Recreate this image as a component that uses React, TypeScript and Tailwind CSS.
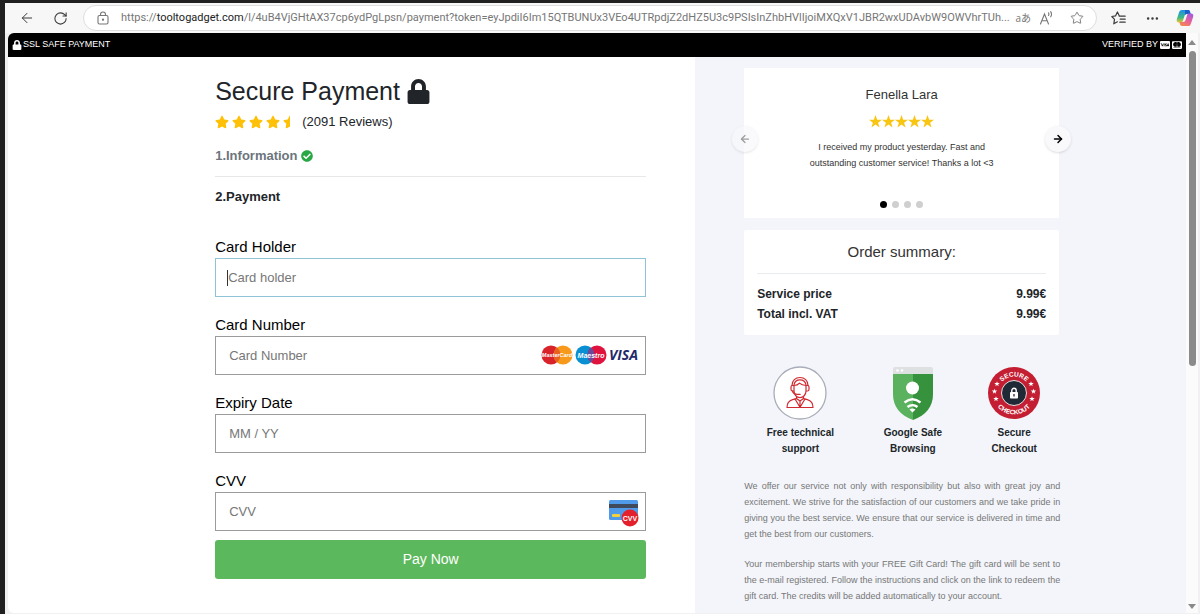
import { ArrowLeft, ArrowRight, MoreHorizontal, RotateCw, Star } from 'lucide-react'
import { FaCcMastercard, FaCcVisa, FaCheckCircle, FaLock, FaStar, FaStarHalf } from 'react-icons/fa'

const slides = [0, 1, 2, 3]

const orderLines = [
  { label: 'Service price', price: '9.99€' },
  { label: 'Total incl. VAT', price: '9.99€' }
]

function CopilotLogo() {
  return (
    <svg width="18" height="18" viewBox="0 0 18 18" aria-hidden="true">
      <defs>
        <linearGradient id="cpLeft" x1="0" y1="0" x2="0" y2="1">
          <stop offset="0" stopColor="#1c8fe8" />
          <stop offset="0.6" stopColor="#3fb984" />
          <stop offset="1" stopColor="#e9c62c" />
        </linearGradient>
        <linearGradient id="cpRight" x1="0.8" y1="0" x2="0.2" y2="1">
          <stop offset="0" stopColor="#a35be0" />
          <stop offset="0.5" stopColor="#e8619c" />
          <stop offset="1" stopColor="#f48a4a" />
        </linearGradient>
      </defs>
      <path d="M6 1h6c1.200 0 1.700.7 2 1.700L14.600 5H11c-1.500 0-2.200.8-2.600 2.200L7 11.600C6.600 13 5.900 13.500 4.600 13.500H3C1 13.500.3 12 .9 10L3 3.600C3.500 2 4.300 1 6 1z" fill="url(#cpLeft)" />
      <path d="M9 1h3c1.200 0 1.700.7 2 1.700L14.600 5H11c-1 0-1.600.3-2 1z" fill="#1d5fc9" />
      <path d="M12 17H6c-1.200 0-1.700-.7-2-1.700L3.400 13H7c1.500 0 2.200-.8 2.600-2.200L11 6.400C11.400 5 12.100 4.500 13.400 4.500H15c2 0 2.700 1.500 2.100 3.500L15 14.400C14.500 16 13.700 17 12 17z" fill="url(#cpRight)" />
    </svg>
  )
}

function BrowserBar() {
  return (
    <header className="flex h-[30px] items-center bg-[#f7f7f7] pr-[6px] pl-[14px] text-[#3b3b3b]">
      <button aria-label="Back">
        <ArrowLeft size={16} strokeWidth={1.5} />
      </button>
      <button aria-label="Refresh" className="ml-[18px]">
        <RotateCw size={15} strokeWidth={1.7} />
      </button>
      <div className="ml-[15px] flex h-[26px] min-w-0 flex-1 items-center rounded-full border border-[#dedede] bg-white px-3 text-[#767676]">
        <svg width="14" height="14" viewBox="0 0 14 14" fill="none" stroke="currentColor" strokeWidth="1.1" className="shrink-0" aria-hidden="true">
          <rect x="2" y="4.500" width="10" height="8.500" rx="1.500" />
          <path d="M4.500 4.500V3.500a2.500 2.500 0 0 1 5 0v1" />
          <circle cx="7" cy="8.700" r="0.600" fill="currentColor" />
        </svg>
        <p className="ml-[11px] min-w-0 flex-1 overflow-hidden font-['Roboto','Open_Sans',sans-serif] text-[11px] whitespace-nowrap">
          https://<span className="text-[#222222]">tooltogadget.com</span>
          /l/4uB4VjGHtAX37cp6ydPgLpsn/payment?token=eyJpdiI6Im15QTBUNUx3VEo4UTRpdjZ2dHZ5U3c9PSIsInZhbHVlIjoiMXQxV1JBR2wxUDAvbW9OWVhrTUh...
        </p>
        <button aria-label="Translate" className="ml-px shrink-0 font-['Open_Sans','Noto_Sans_CJK_JP',sans-serif] text-[10px]">
          aあ
        </button>
        <button aria-label="Read aloud" className="ml-2">
          <svg width="15" height="15" viewBox="0 0 15 15" fill="none" stroke="currentColor" strokeWidth="1.1" strokeLinecap="round">
            <path d="M1.500 13 5.500 3l4 10M2.800 9.800h5.400M9.500 4.500c.5-.8.5-1.800 0-2.600M11.700 5.800c1-1.600 1-3.600 0-5.200" />
          </svg>
        </button>
        <button aria-label="Add to favorites" className="ml-4">
          <Star size={14} strokeWidth={1.6} />
        </button>
      </div>
      <button aria-label="Favorites" className="ml-[14px]">
        <svg width="16" height="15" viewBox="0 0 16 15" fill="none" stroke="currentColor" strokeWidth="1.2" strokeLinecap="round" strokeLinejoin="round">
          <path d="M8.200 4.700 6.400 1 4.500 4.900.8 5.500l2.700 2.800-.7 4.500 3.600-2M8.200 5.200h6M9.200 8.200h5M8.800 11.200h5.400" />
        </svg>
      </button>
      <button aria-label="Settings and more" className="ml-[18px]">
        <MoreHorizontal size={15} strokeWidth={2} />
      </button>
      <button aria-label="Copilot" className="ml-4">
        <CopilotLogo />
      </button>
    </header>
  )
}

function CardLogos() {
  return (
    <svg width="98" height="20" viewBox="0 0 98 20" role="img" aria-label="MasterCard, Maestro, Visa">
      <circle cx="10" cy="10" r="9.500" fill="#d8232a" />
      <circle cx="22" cy="10" r="9.500" fill="#f79a1c" />
      <path d="M16 2.600a9.500 9.500 0 0 1 0 14.800 9.500 9.500 0 0 1 0-14.800z" fill="#e8611f" />
      <text x="16" y="12" textAnchor="middle" fontSize="5.500" fontWeight="700" fontStyle="italic" fill="#fff">MasterCard</text>
      <circle cx="44" cy="10" r="9.500" fill="#0a8fd2" />
      <circle cx="56" cy="10" r="9.500" fill="#e0133f" />
      <path d="M50 2.600a9.500 9.500 0 0 1 0 14.800 9.500 9.500 0 0 1 0-14.800z" fill="#6b4a9c" />
      <text x="50" y="12.500" textAnchor="middle" fontSize="7" fontWeight="700" fontStyle="italic" fill="#fff">Maestro</text>
      <text x="68" y="14.500" fontSize="14" fontWeight="700" fontStyle="italic" fill="#1f2a6b" fontFamily="Open Sans">VISA</text>
    </svg>
  )
}

function CvvCard() {
  return (
    <svg width="32" height="28" viewBox="0 0 32 28" role="img" aria-label="Card security code">
      <rect x="1" y="1" width="29" height="20" rx="1.500" fill="#4f9bea" />
      <rect x="1" y="5" width="29" height="4" fill="#3f4a5c" />
      <rect x="4" y="15" width="8" height="3" rx="1" fill="#f2d13c" />
      <circle cx="22" cy="19" r="8.500" fill="#e4202c" />
      <text x="22" y="21.500" textAnchor="middle" fontSize="7" fontWeight="700" fill="#fff">CVV</text>
    </svg>
  )
}

function SupportBadge() {
  return (
    <svg width="54" height="54" viewBox="0 0 54 54" fill="none" aria-hidden="true">
      <circle cx="27" cy="27" r="26" fill="#fff" stroke="#a9adb8" strokeWidth="1.300" />
      <g stroke="#cf2b30" strokeWidth="1.200" strokeLinecap="round" strokeLinejoin="round">
        <path d="M19 19.500c0-5 3.500-8 8-8s8 3 8 8M21 19c.4-3.300 3-5.200 6-5.200s5.600 1.900 6 5.200" />
        <path d="M21 19.500V25c0 3.800 2.800 6.700 6 6.700s6-2.900 6-6.700v-5.500c-3 0-5-.8-6.500-2.300-1.300 1.500-3 2.300-5.500 2.300z" />
        <path d="M20.500 19.500h-1c-1 0-1.500.7-1.500 1.500v2.500c0 1 .6 1.500 1.500 1.500h1M33.500 19.500h1c1 0 1.500.7 1.500 1.500v2.500c0 1-.6 1.500-1.500 1.500h-1" />
        <path d="M19.500 25c.5 2.300 2.500 3.300 5.200 3.300h2.500" />
        <path d="M14 41.500c0-5 1.800-6.900 5.600-7.900l3.900-1V31M40 41.500c0-5-1.800-6.900-5.600-7.900l-3.900-1V31M14 41.500h26" />
        <path d="m22 33 5 8.300 5-8.300M23.500 32.500 27 35l3.500-2.500M27 35v6" />
      </g>
    </svg>
  )
}

function BrowsingBadge() {
  return (
    <svg width="42" height="54" viewBox="0 0 42 54" fill="none" aria-hidden="true">
      <path d="M1 7h20v47C8 49 1 41 1 28z" fill="#5ab25e" />
      <path d="M21 7h20v21c0 13-7 21-20 26z" fill="#36923c" />
      <path d="M3 1h36a2 2 0 0 1 2 2v5H1V3a2 2 0 0 1 2-2z" fill="#dfe0e2" />
      <circle cx="5.500" cy="4.500" r="1.300" fill="#fff" />
      <circle cx="10" cy="4.500" r="1.300" fill="#fff" />
      <circle cx="20.500" cy="22" r="6.500" fill="#fff" />
      <g stroke="#fff" strokeWidth="2.400">
        <path d="M12.500 36.500c5-4 11-4 16 0M15.500 41c3-2.500 7-2.500 10 0" />
      </g>
      <path d="M20.500 46.500 17.500 43.500c1.800-1.300 4.200-1.300 6 0z" fill="#fff" />
    </svg>
  )
}

function CheckoutBadge() {
  const star = 'M0-2.800.7-.9 2.700-.9 1.100.4 1.700 2.300 0 1.100-1.700 2.300-1.100.4-2.700-.9-.7-.9z'
  return (
    <svg width="54" height="54" viewBox="0 0 54 54" role="img" aria-label="Secure checkout seal">
      <defs>
        <path id="sealTop" d="M10.500 27a16.500 16.500 0 0 1 33 0" />
        <path id="sealBottom" d="M5.500 27a21.500 21.500 0 0 0 43 0" />
      </defs>
      <circle cx="27" cy="27" r="26" fill="#c41e33" />
      <circle cx="27" cy="27" r="12.500" fill="#202a36" stroke="#eadfe1" strokeWidth="1" />
      <g fontSize="6.500" fontWeight="700" fill="#fff" textAnchor="middle">
        <text><textPath href="#sealTop" startOffset="50%">SECURE</textPath></text>
        <text><textPath href="#sealBottom" startOffset="50%">CHECKOUT</textPath></text>
      </g>
      <g fill="#fff">
        <path transform="translate(10 18)" d={star} />
        <path transform="translate(7.500 25.500)" d={star} />
        <path transform="translate(9 33)" d={star} />
        <path transform="translate(44 18)" d={star} />
        <path transform="translate(46.500 25.500)" d={star} />
        <path transform="translate(45 33)" d={star} />
        <rect x="23" y="26" width="8" height="6.500" rx="0.800" />
      </g>
      <path d="M24.800 26.500v-2a2.200 2.200 0 0 1 4.400 0v2" fill="none" stroke="#fff" strokeWidth="1.400" />
      <path d="M27 28v2.500" stroke="#202a36" strokeWidth="1.300" />
    </svg>
  )
}

function PaymentForm() {
  const field = 'block h-[39px] w-full border border-[#9b9b9b] bg-white px-[13px] text-[13px] text-[#212529] outline-none placeholder:text-[#777777]'
  const label = 'block text-[15px] leading-[22px] text-black'

  return (
    <form className="w-full max-w-[431px]">
      <h1 className="flex items-center gap-[6px] text-[25px] leading-8 text-[#212529]">
        Secure Payment
        <FaLock size={25} />
      </h1>
      <div className="mt-[5px] flex items-center text-[13px] leading-5 text-[#212529]">
        <span className="flex gap-[3px] text-[#ffc107]">
          <FaStar size={14} />
          <FaStar size={14} />
          <FaStar size={14} />
          <FaStar size={14} />
          <FaStarHalf size={14} />
        </span>
        <span className="ml-[5px]">(2091 Reviews)</span>
      </div>

      <h2 className="mt-[14px] flex items-center gap-[3px] border-b border-[#e6e8ea] pb-[10px] text-[13px] leading-5 font-bold text-[#6c757d]">
        1.Information
        <FaCheckCircle size={12} className="text-[#28a745]" />
      </h2>
      <h2 className="mt-[10px] text-[13px] leading-5 font-bold text-[#212529]">2.Payment</h2>

      <div className="mt-[29px] flex flex-col gap-[17px]">
        <div>
          <label htmlFor="holder" className={label}>Card Holder</label>
          <div className="relative">
            <input id="holder" placeholder="Card holder" className="block h-[39px] w-full border border-[#8fc3d6] bg-white px-3 text-[13px] text-[#212529] outline-none placeholder:text-[#777777]" />
            <span className="absolute top-3 left-[12px] h-4 w-px bg-[#333333]" />
          </div>
        </div>
        <div>
          <label htmlFor="number" className={label}>Card Number</label>
          <div className="relative">
            <input id="number" placeholder="Card Number" inputMode="numeric" className={field} />
            <span className="absolute top-[9px] right-[7px]">
              <CardLogos />
            </span>
          </div>
        </div>
        <div>
          <label htmlFor="expiry" className={label}>Expiry Date</label>
          <input id="expiry" placeholder="MM / YY" className={field} />
        </div>
        <div>
          <label htmlFor="cvv" className={label}>CVV</label>
          <div className="relative">
            <input id="cvv" placeholder="CVV" inputMode="numeric" className={field} />
            <span className="absolute top-[7px] right-[6px]">
              <CvvCard />
            </span>
          </div>
        </div>
      </div>

      <button type="button" className="mt-[9px] h-[39px] w-full rounded-[3px] bg-[#5cb85c] text-[14px] text-white">
        Pay Now
      </button>
    </form>
  )
}

function Testimonial() {
  return (
    <section className="relative h-[150px] bg-white pt-[17px] text-center text-[#333333]">
      <h3 className="text-[13px] leading-5">Fenella Lara</h3>
      <div className="mt-[10px] flex justify-center text-[#f9c513]">
        {[...Array(5)].map((_, i) => (
          <svg key={i} width="13" height="13" viewBox="0 0 24 24" fill="currentColor" aria-hidden="true">
            <path d="M12 0l3.100 8.700H24l-7.200 5.400L19.500 23 12 17.600 4.500 23l2.700-8.900L0 8.700h8.900z" />
          </svg>
        ))}
      </div>
      <p className="mx-auto mt-[11px] max-w-[200px] text-[9px] leading-4">
        I received my product yesterday. Fast and outstanding customer service! Thanks a lot &lt;3
      </p>
      <div className="mt-[30px] flex justify-center gap-[5px]">
        {slides.map((i) => (
          <button
            key={i}
            aria-label={`Review ${i + 1}`}
            className={`size-[7px] rounded-full ${i === 0 ? 'bg-black' : 'bg-[#cfcfcf]'}`}
          />
        ))}
      </div>
      <button aria-label="Previous review" className="absolute top-[58px] -left-3 flex size-[26px] items-center justify-center rounded-full bg-[#f8f8fb] text-[#777777] opacity-70 shadow-sm">
        <ArrowLeft size={12} strokeWidth={2.5} />
      </button>
      <button aria-label="Next review" className="absolute top-[58px] -right-3 flex size-[26px] items-center justify-center rounded-full bg-[#f9f9fb] text-black shadow">
        <ArrowRight size={12} strokeWidth={3} />
      </button>
    </section>
  )
}

function OrderSummary() {
  return (
    <section className="mt-3 rounded-[2px] bg-white px-[13px] pt-3 pb-[11px] text-[#212529]">
      <h3 className="border-b border-[#e9ecef] pb-[11px] text-center text-[15px] leading-5 text-[#333333]">Order summary:</h3>
      <table className="mt-[10px] w-full text-[12px] leading-5 font-bold">
        <tbody>
          {orderLines.map((line) => (
            <tr key={line.label}>
              <td>{line.label}</td>
              <td className="text-right">{line.price}</td>
            </tr>
          ))}
        </tbody>
      </table>
    </section>
  )
}

function TrustBadges() {
  return (
    <ul className="mt-[31px] grid grid-cols-[5fr_5fr_4fr] text-center text-[10px] leading-4 font-bold text-[#212529]">
      <li className="flex flex-col items-center gap-[5px]">
        <SupportBadge />
        <span>Free technical<br />support</span>
      </li>
      <li className="flex flex-col items-center gap-[5px]">
        <BrowsingBadge />
        <span>Google Safe<br />Browsing</span>
      </li>
      <li className="flex flex-col items-center gap-[5px]">
        <CheckoutBadge />
        <span>Secure<br />Checkout</span>
      </li>
    </ul>
  )
}

export default function App() {
  return (
    <div className="flex min-h-screen flex-col bg-[#202020] pt-[3px] pl-[5px] font-['Liberation_Sans',Arial,sans-serif]">
      <BrowserBar />
      <div className="flex flex-1 bg-[#f1f1f1] pr-[2px] pb-px pl-[3px]">
        <div className="flex min-w-0 flex-1 flex-col overflow-hidden rounded-l-md bg-white">
          <div className="flex h-6 items-center justify-between bg-black px-1 text-[9px] text-white">
            <span className="flex items-center gap-px">
              <FaLock size={10} />
              SSL SAFE PAYMENT
            </span>
            <span className="flex items-center gap-[2px]">
              VERIFIED BY
              <FaCcVisa size={10} />
              <FaCcMastercard size={10} />
            </span>
          </div>

          <main className="grid flex-1 grid-cols-[7fr_5fr]">
            <div className="flex justify-end pt-[18px] pr-[49px] pl-4">
              <PaymentForm />
            </div>
            <aside className="bg-[#f3f5fa] px-[49px] pt-[11px] pb-2">
              <div className="max-w-[315px]">
                <Testimonial />
                <OrderSummary />
                <TrustBadges />
              </div>
              <div className="mt-[21px] flex max-w-[316px] flex-col gap-[14px] text-justify text-[9px] leading-4 text-[#777777]">
                <p>
                  We offer our service not only with responsibility but also with great joy and excitement. We strive
                  for the satisfaction of our customers and we take pride in giving you the best service. We ensure
                  that our service is delivered in time and get the best from our customers.
                </p>
                <p>
                  Your membership starts with your FREE Gift Card! The gift card will be sent to the e-mail
                  registered. Follow the instructions and click on the link to redeem the gift card. The credits will
                  be added automatically to your account.
                </p>
              </div>
            </aside>
          </main>
        </div>

        <div className="flex w-3 flex-col items-center bg-[#fbfbfb] pt-[7px] pb-1" aria-hidden="true">
          <svg width="8" height="5" viewBox="0 0 8 5"><path d="M4 0l4 5H0z" fill="#8a8a8a" /></svg>
          <div className="mt-[6px] h-[315px] w-[7px] rounded-full bg-[#8b8b8b]" />
          <svg className="mt-auto" width="8" height="5" viewBox="0 0 8 5"><path d="M4 5l4-5H0z" fill="#8a8a8a" /></svg>
        </div>
      </div>
    </div>
  )
}
